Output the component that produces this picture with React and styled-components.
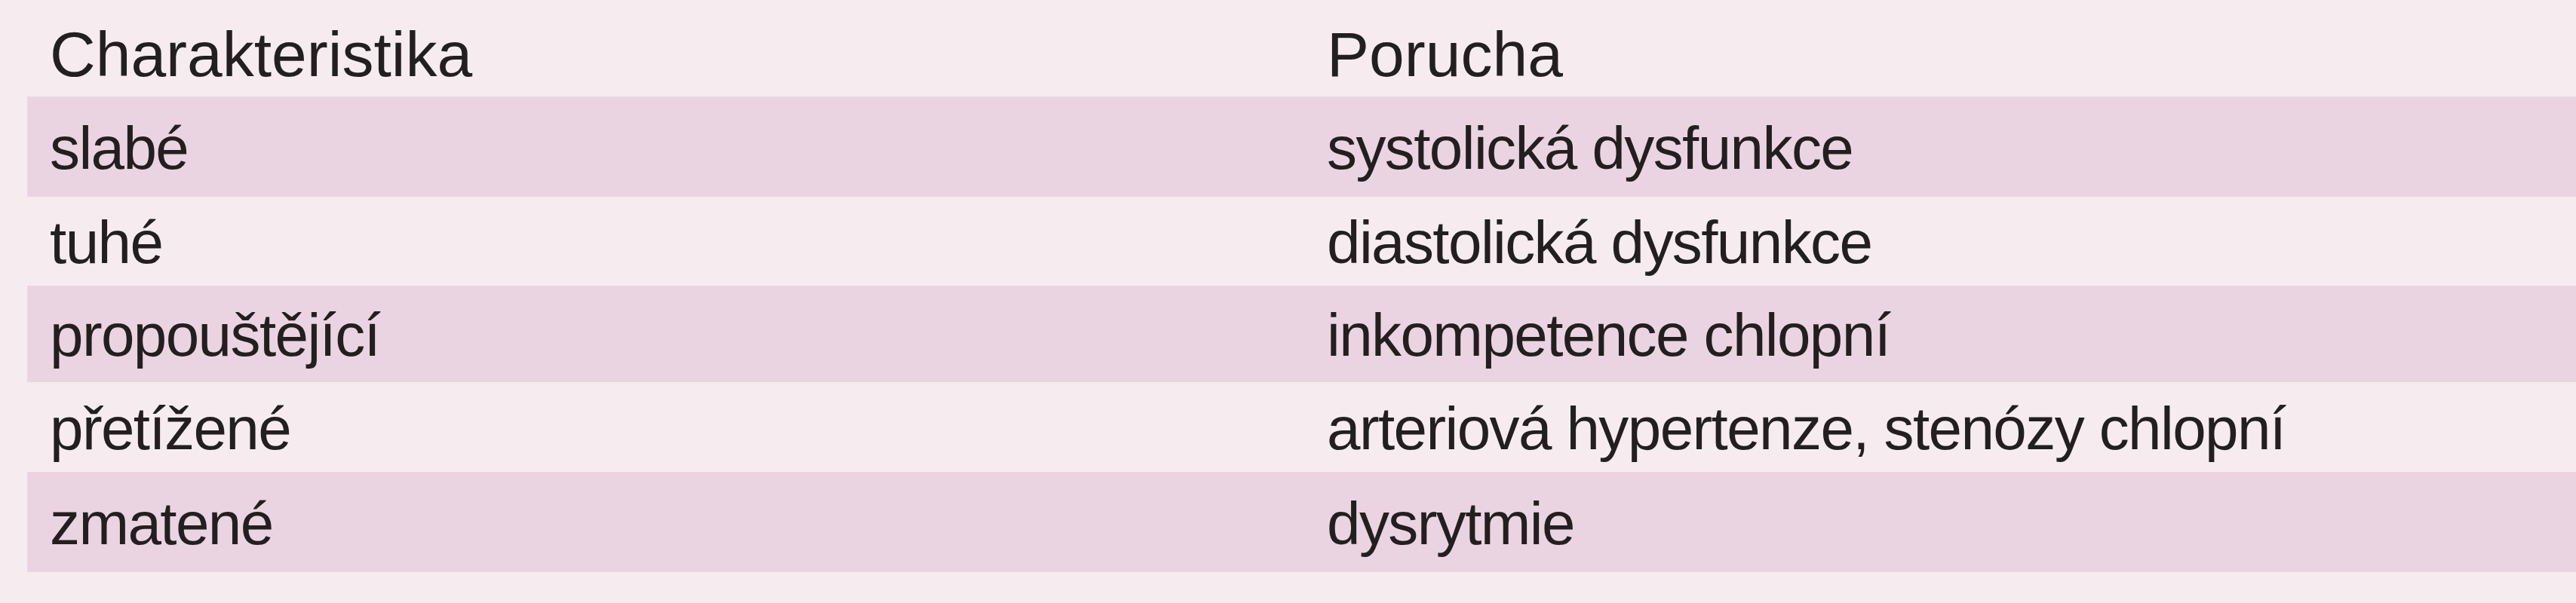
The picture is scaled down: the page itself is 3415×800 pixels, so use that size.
import React from 'react'
import styled, { createGlobalStyle } from 'styled-components'

const GlobalStyle = createGlobalStyle`
  html, body {
    margin: 0;
    padding: 0;
    background: #f6ecf0;
  }
  body {
    font-family: "Liberation Sans", Arial, sans-serif;
    color: #231f20;
  }
`

const Page = styled.div`
  width: 3415px;
  height: 800px;
  background: #f6ecf0;
  padding-left: 36px;
  box-sizing: border-box;
  overflow: hidden;
`

const Table = styled.div`
  display: flex;
  flex-direction: column;
`

const Row = styled.div`
  display: grid;
  grid-template-columns: 1693px 1fr;
  align-items: center;
  height: ${(p) => p.$height}px;
  background: ${(p) => (p.$shaded ? '#ebd4e1' : 'transparent')};
`

const HeadCell = styled.div`
  padding: 16px 0 0 30px;
  font-size: 84px;
  line-height: 84px;
  white-space: nowrap;
`

const Cell = styled.div`
  padding: 4px 0 0 30px;
  font-size: 80px;
  line-height: 80px;
  letter-spacing: -1.6px;
  white-space: nowrap;
`

const rows = [
  { trait: 'slabé', disorder: 'systolická dysfunkce', height: 133 },
  { trait: 'tuhé', disorder: 'diastolická dysfunkce', height: 118 },
  { trait: 'propouštějící', disorder: 'inkompetence chlopní', height: 128 },
  { trait: 'přetížené', disorder: 'arteriová hypertenze, stenózy chlopní', height: 119 },
  { trait: 'zmatené', disorder: 'dysrytmie', height: 133 },
]

const App = () => {
  return (
    <>
      <GlobalStyle />
      <Page>
        <Table>
          <Row $height={128}>
            <HeadCell>Charakteristika</HeadCell>
            <HeadCell>Porucha</HeadCell>
          </Row>
          {rows.map((r, i) => (
            <Row key={r.trait} $height={r.height} $shaded={i % 2 === 0}>
              <Cell>{r.trait}</Cell>
              <Cell>{r.disorder}</Cell>
            </Row>
          ))}
        </Table>
      </Page>
    </>
  )
}

export default App
